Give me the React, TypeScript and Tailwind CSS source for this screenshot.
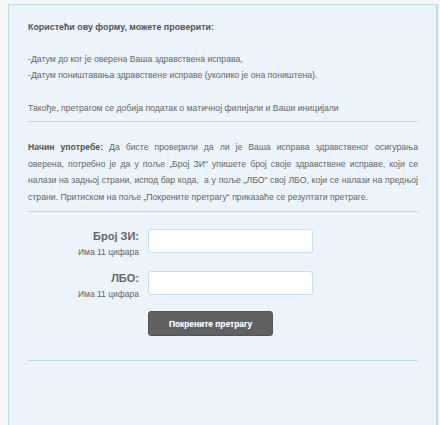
import React from "react";

function Row({ label }: { label: string }) {
  return (
    <div className="flex items-start gap-[9px]">
      <div className="w-[111px] text-right">
        <div className="text-[11px] font-bold leading-[14px] text-[#666]">{label}</div>
        <div className="text-[8.5px] leading-[12px] mt-[3px] text-[#666]">Има 11 цифара</div>
      </div>
      <input className="h-[24px] w-[165px] rounded-[3px] border border-[#c5dff0] bg-white" />
    </div>
  );
}

export default function App() {
  const justified = "text-justify [text-align-last:justify]";
  return (
    <div className="min-h-[425px] w-[440px] bg-[#f5f5f5] pt-[4px] pl-[8px] pr-[2px]" style={{ fontFamily: '"Liberation Sans", Arial, sans-serif' }}>
      <div className="min-h-[430px] border-l border-t border-r-2 border-b-2 border-[#b9dcf1] bg-[#ebf3fb] pl-[19px] pr-[18px] pt-[14px] text-[8.7px] leading-[16px] text-[#666]">
        <p className="font-bold text-[#555] text-[8.9px]">Користећи ову форму, можете проверити:</p>
        <div className="mt-[16px]">
          <p>-Датум до ког је оверена Ваша здравствена исправа,</p>
          <p>-Датум поништавања здравствене исправе (уколико је она поништена).</p>
        </div>
        <p className="mt-[17px]">Такође, претрагом се добија податак о матичној филијали и Ваши иницијали</p>
        <div className="mt-[5px] h-px bg-[#b9dcf1]" />
        <div className="mt-[17px] leading-[16.5px]">
          <p className={justified}>
            <span className="font-bold text-[#555]">Начин употребе:</span> Да бисте проверили да ли је Ваша исправа здравственог осигурања
          </p>
          <p className={justified}>оверена, потребно је да у поље „Број ЗИ“ упишете број своје здравствене исправе, који се</p>
          <p className={justified}>налази на задњој страни, испод бар кода,&nbsp; а у поље „ЛБО“ свој ЛБО, који се налази на предњој</p>
          <p>страни. Притиском на поље „Покрените претрагу“ приказаће се резултати претраге.</p>
        </div>
        <div className="mt-[6px] h-px bg-[#b9dcf1]" />
        <div className="mt-[17px] flex flex-col">
          <Row label="Број ЗИ:" />
          <div className="mt-[13px]">
            <Row label="ЛБО:" />
          </div>
          <div className="mt-[11px] pl-[120px]">
            <button className="h-[25px] w-[125px] rounded-[3px] bg-[#616161] text-[8.4px] font-bold text-white border border-[#555] [text-shadow:0_0_1px_rgba(180,200,255,0.6)]">Покрените претрагу</button>
          </div>
        </div>
        <div className="mt-[24px] h-px bg-[#b9dcf1]" />
      </div>
    </div>
  );
}
